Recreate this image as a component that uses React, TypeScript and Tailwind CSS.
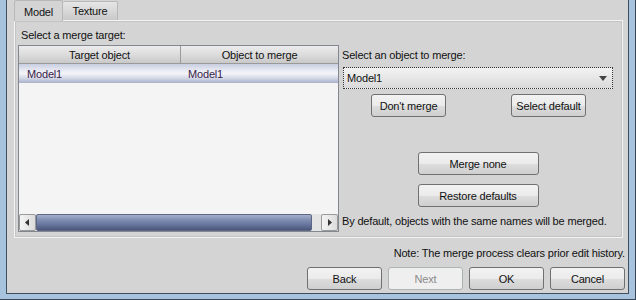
import React from "react";

const font = { fontFamily: '"Liberation Sans", Arial, sans-serif' };

function Btn({ children, w = "w-[75px]", disabled = false }: { children: React.ReactNode; w?: string; disabled?: boolean }) {
  return (
    <div
      className={`${w} h-[23px] rounded-[3px] border flex items-center justify-center text-[11px] ${
        disabled
          ? "border-[#adb2b5] bg-[#efefef] text-[#8a8a8a]"
          : "border-[#707070] bg-[linear-gradient(#f2f2f2_0%,#ebebeb_50%,#dddddd_51%,#cfcfcf_100%)] text-[#111]"
      }`}
    >
      {children}
    </div>
  );
}

export default function App() {
  return (
    <div
      className="w-[636px] h-[300px] bg-[#a8c3de] border-r border-b border-[#36475a] pl-[6px] pr-[6px] pb-[5px] flex overflow-hidden"
      style={font}
    >
      <div className="flex-1 flex flex-col bg-[#d4d4d4] border-l border-r border-b border-[#3f4f62] text-[11px] tracking-[-0.17px] text-[#111] leading-[14px]">
        {/* tabs */}
        <div className="flex ml-[7px] h-[20px] items-end relative z-10">
          <div className="w-[49px] h-[21px] -mb-[1px] bg-[#d4d4d4] border-t border-l border-r border-[#b8b8b8] rounded-t-[2px] flex items-center justify-center pt-[1px]">
            Model
          </div>
          <div className="w-[55px] h-[19px] bg-[linear-gradient(#e6e6e6,#c9c9c9)] border-t border-r border-[#b8b8b8] rounded-t-[2px] flex items-center justify-center">
            Texture
          </div>
        </div>
        {/* panel */}
        <div className="ml-[7px] mr-[5px] h-[218px] border border-[#f3f3f3] shadow-[inset_0_0_0_1px_#c4c4c4] flex">
          <div className="flex flex-col pl-[3px] pt-[7px]">
            <div className="pl-[3px] h-[14px]">Select a merge target:</div>
            <div className="mt-[3px] w-[321px] h-[187px] border border-[#828790] bg-[#f4f4f4] flex flex-col">
              <div className="flex h-[18px] bg-[linear-gradient(#ececec,#dcdcdc_50%,#c9c9c9)] border-b border-[#9a9a9a]">
                <div className="w-[162px] border-r border-[#9a9a9a] flex items-center justify-center">Target object</div>
                <div className="flex-1 flex items-center justify-center">Object to merge</div>
              </div>
              <div className="flex h-[19px] items-center bg-[linear-gradient(#c8cde0_0%,#e9ecf4_35%,#f3f4f8_50%,#d3d8e6_75%,#a9b1c9_100%)] text-[#3a1c48]">
                <div className="w-[162px] pl-[8px]">Model1</div>
                <div className="flex-1 pl-[7px]">Model1</div>
              </div>
              <div className="flex-1" />
              <div className="h-[17px] flex bg-[#e4e4e4]">
                <div className="w-[17px] h-[17px] border border-[#9a9a9a] rounded-[2px] bg-[linear-gradient(90deg,#f4f4f4,#dcdcdc)] flex items-center justify-center">
                  <svg width="5" height="7" viewBox="0 0 5 7"><path d="M4 0 L0 3.5 L4 7 Z" fill="#333" /></svg>
                </div>
                <div className="w-[276px] h-[17px] rounded-[2px] border border-[#5d6785] bg-[linear-gradient(#a4afcb_0%,#8390b4_30%,#6f7ca3_55%,#5b6890_80%,#4c5678_100%)]" />
                <div className="flex-1" />
                <div className="w-[17px] h-[17px] border border-[#9a9a9a] rounded-[2px] bg-[linear-gradient(90deg,#f4f4f4,#dcdcdc)] flex items-center justify-center">
                  <svg width="5" height="7" viewBox="0 0 5 7"><path d="M1 0 L5 3.5 L1 7 Z" fill="#333" /></svg>
                </div>
              </div>
            </div>
          </div>
          <div className="flex flex-col pl-[3px] pt-[27px] w-[280px]">
            <div className="h-[14px]">Select an object to merge:</div>
            <div className="mt-[5px] ml-[1px] w-[270px] h-[22px] border border-dotted border-[#333] bg-[linear-gradient(#f3f3f3,#e6e6e6_50%,#dadada)] flex items-center pl-[3px] pr-[5px]">
              <span className="flex-1">Model1</span>
              <svg width="8" height="5" viewBox="0 0 8 5"><path d="M0 0 H8 L4 5 Z" fill="#444" /></svg>
            </div>
            <div className="mt-[5px] ml-[29px] w-[215px] flex justify-between">
              <Btn>Don&apos;t merge</Btn>
              <Btn>Select default</Btn>
            </div>
            <div className="ml-[1px] w-[270px] flex flex-col items-center mt-[35px] gap-[9px]">
              <Btn w="w-[121px]">Merge none</Btn>
              <Btn w="w-[121px]">Restore defaults</Btn>
            </div>
            <div className="mt-[7px] h-[14px] whitespace-nowrap">By default, objects with the same names will be merged.</div>
          </div>
        </div>
        {/* bottom */}
        <div className="mt-[8px] h-[14px] text-right mr-[3px]">Note: The merge process clears prior edit history.</div>
        <div className="mt-[7px] flex justify-end gap-[6px] mr-[3px]">
          <Btn>Back</Btn>
          <Btn disabled>Next</Btn>
          <Btn>OK</Btn>
          <Btn>Cancel</Btn>
        </div>
      </div>
    </div>
  );
}
